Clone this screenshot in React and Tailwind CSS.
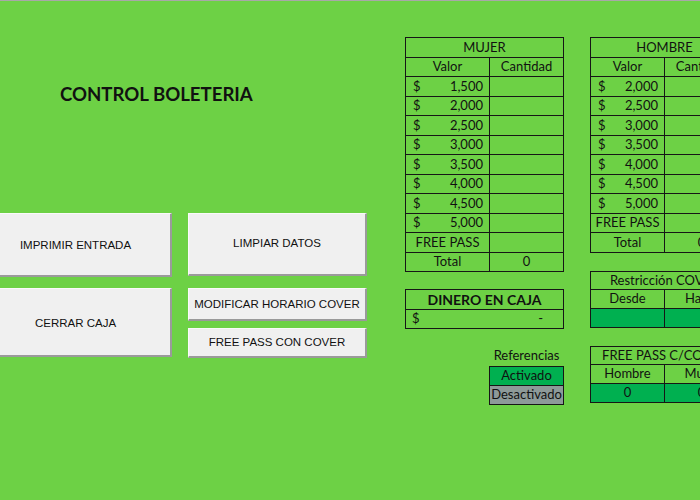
import React from "react";

const F = { fontFamily: "Lato, 'Open Sans', sans-serif" };

function Btn({ children, className = "" }) {
  return (
    <div
      className={
        "flex items-center justify-center bg-[#f0f0f0] border-t border-l border-[#fafafa] border-r-2 border-b-2 border-r-[#9a9a9a] border-b-[#9a9a9a] text-[11.5px] text-[#111] " +
        className
      }
      style={{ fontFamily: "'Liberation Sans', Arial, sans-serif" }}
    >
      {children}
    </div>
  );
}

function Cell({ children, className = "", h = "h-[19.5px]" }) {
  return (
    <div className={"border-r border-b border-[#161616] flex items-center " + h + " " + className}>
      {children}
    </div>
  );
}

function Money({ v, h }) {
  return (
    <Cell h={h} className="justify-between pl-[7px] pr-[6px]">
      <span>$</span>
      <span>{v}</span>
    </Cell>
  );
}

function App() {
  const mujer = ["1,500", "2,000", "2,500", "3,000", "3,500", "4,000", "4,500", "5,000"];
  const hombre = ["2,000", "2,500", "3,000", "3,500", "4,000", "4,500", "5,000"];
  return (
    <div
      className="w-[700px] h-[500px] bg-[#6dd145] border-t border-[#a8a8a8] flex overflow-hidden text-[13px] text-[#111]"
      style={F}
    >
      {/* Left section */}
      <div className="w-[405px] shrink-0 flex flex-col">
        <div className="mt-[82px] pl-[60px] h-[24px] flex items-center text-[18.6px] font-bold">
          CONTROL BOLETERIA
        </div>
        <div className="mt-[106px] ml-[-20px] flex gap-[16px]">
          <div className="w-[192px] flex flex-col gap-[11px]">
            <Btn className="h-[64px] pt-[3px]">IMPRIMIR ENTRADA</Btn>
            <Btn className="h-[69px] pt-[3px]">CERRAR CAJA</Btn>
          </div>
          <div className="w-[179px] flex flex-col">
            <Btn className="h-[63px]">LIMPIAR DATOS</Btn>
            <Btn className="h-[33px] mt-[12px] pt-[1px]">MODIFICAR HORARIO COVER</Btn>
            <Btn className="h-[30px] mt-[7px] pt-[1px]">FREE PASS CON COVER</Btn>
          </div>
        </div>
      </div>

      {/* Mujer column */}
      <div className="w-[159px] shrink-0 flex flex-col pt-[36px]">
        <div className="grid grid-cols-[84px_74px] border-l border-t border-[#161616]">
          <Cell className="col-span-2 justify-center">MUJER</Cell>
          <Cell className="justify-center">Valor</Cell>
          <Cell className="justify-center">Cantidad</Cell>
          {mujer.map((v) => (
            <React.Fragment key={v}>
              <Money v={v} />
              <Cell />
            </React.Fragment>
          ))}
          <Cell className="justify-center">FREE PASS</Cell>
          <Cell />
          <Cell className="justify-center">Total</Cell>
          <Cell className="justify-center">0</Cell>
        </div>

        <div className="mt-[17px] grid grid-cols-[158px] border-l border-t border-[#161616]">
          <Cell h="h-[19.5px]" className="justify-center font-bold text-[14px]">
            DINERO EN CAJA
          </Cell>
          <Cell h="h-[19px]" className="justify-between pl-[6px] pr-[20px]">
            <span>$</span>
            <span>-</span>
          </Cell>
        </div>

        <div className="mt-[18px] ml-[84px] w-[75px] flex flex-col">
          <div className="h-[19px] flex items-center justify-center">Referencias</div>
          <div className="grid grid-cols-[74px] border-l border-t border-[#161616]">
            <Cell h="h-[19px]" className="justify-center bg-[#00b050]">Activado</Cell>
            <Cell h="h-[19px]" className="justify-center bg-[#8d9a99]">Desactivado</Cell>
          </div>
        </div>
      </div>

      {/* Hombre column */}
      <div className="ml-[26px] w-[160px] shrink-0 flex flex-col pt-[36px]">
        <div className="grid grid-cols-[74px_74px] border-l border-t border-[#161616]">
          <Cell className="col-span-2 justify-center">HOMBRE</Cell>
          <Cell className="justify-center">Valor</Cell>
          <Cell className="justify-center">Cantidad</Cell>
          {hombre.map((v) => (
            <React.Fragment key={v}>
              <Money v={v} />
              <Cell />
            </React.Fragment>
          ))}
          <Cell className="justify-center">FREE PASS</Cell>
          <Cell />
          <Cell className="justify-center">Total</Cell>
          <Cell className="justify-center">0</Cell>
        </div>

        <div className="mt-[18px] grid grid-cols-[74px_74px] border-l border-t border-[#161616]">
          <Cell h="h-[18.7px]" className="col-span-2 justify-center">Restricción COVER</Cell>
          <Cell h="h-[18.7px]" className="justify-center">Desde</Cell>
          <Cell h="h-[18.7px]" className="justify-center">Hasta</Cell>
          <Cell h="h-[18.7px]" className="bg-[#00b050]" />
          <Cell h="h-[18.7px]" className="bg-[#00b050]" />
        </div>

        <div className="mt-[18px] grid grid-cols-[74px_74px] border-l border-t border-[#161616]">
          <Cell h="h-[18.7px]" className="col-span-2 justify-center">FREE PASS C/COVER</Cell>
          <Cell h="h-[18.7px]" className="justify-center">Hombre</Cell>
          <Cell h="h-[18.7px]" className="justify-center">Mujer</Cell>
          <Cell h="h-[18.7px]" className="justify-center bg-[#00b050]">0</Cell>
          <Cell h="h-[18.7px]" className="justify-center bg-[#00b050]">0</Cell>
        </div>
      </div>
    </div>
  );
}

export default App;
